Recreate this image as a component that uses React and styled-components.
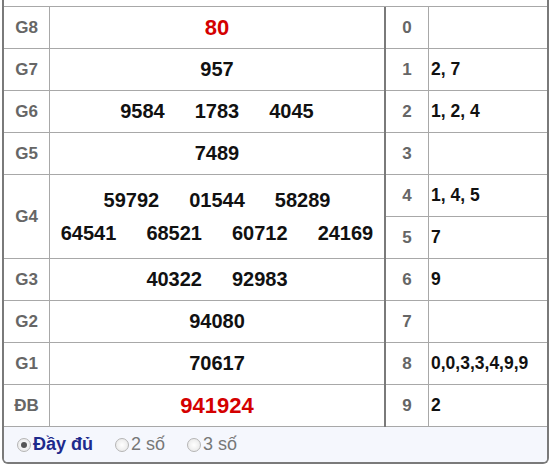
import React from 'react';
import styled, { createGlobalStyle } from 'styled-components';

const GlobalStyle = createGlobalStyle`
  body {
    margin: 0;
    background: #ffffff;
    font-family: "Liberation Sans", Arial, sans-serif;
  }
`;

const Frame = styled.div`
  margin-left: 2px;
  width: 543px;
  border: 2px solid #7a7a7a;
  border-top: none;
  border-radius: 0 0 6px 6px;
  overflow: hidden;
`;

const Caption = styled.div`
  height: 6px;
  border-bottom: 1px solid #a8a8a8;
`;

const Tables = styled.div`
  display: flex;
`;

const MainTable = styled.div`
  display: grid;
  grid-template-columns: 46px 334px;
  grid-auto-rows: 42px;
  border-right: 1px solid #7a7a7a;
`;

const LotoTable = styled.div`
  flex: 1;
  display: grid;
  grid-template-columns: 43px 1fr;
  grid-auto-rows: 42px;
  border-left: 1px solid #7a7a7a;
`;

const Cell = styled.div`
  display: flex;
  align-items: center;
  border-bottom: 1px solid #a8a8a8;
  grid-row: ${(p) => (p.$span ? `span ${p.$span}` : 'auto')};
`;

const Label = styled(Cell)`
  justify-content: center;
  border-right: 1px solid #a8a8a8;
  color: #666666;
  font-weight: bold;
  font-size: 17px;
`;

const Prize = styled(Cell)`
  flex-direction: column;
  justify-content: center;
  gap: 10px;
`;

const Line = styled.div`
  display: flex;
  justify-content: center;
  gap: 30px;
`;

const Num = styled.span`
  font-weight: bold;
  font-size: ${(p) => (p.$hot ? '22px' : '20px')};
  color: ${(p) => (p.$hot ? '#d40000' : '#111111')};
`;

const Head = styled(Cell)`
  justify-content: center;
  border-right: 1px solid #a8a8a8;
  color: #666666;
  font-weight: bold;
  font-size: 17px;
`;

const Tail = styled(Cell)`
  padding-left: 2px;
  color: #111111;
  font-weight: bold;
  font-size: 17.5px;
  white-space: nowrap;
`;

const Footer = styled.div`
  height: 35px;
  background: #f5f7fd;
  display: flex;
  align-items: center;
  padding-left: 13px;
  gap: 22px;
`;

const Option = styled.label`
  display: flex;
  align-items: center;
  gap: 2px;
  font-size: 18px;
  font-weight: ${(p) => (p.$active ? 'bold' : 'normal')};
  color: ${(p) => (p.$active ? '#1d2a8c' : '#777777')};
`;

const Dot = styled.span`
  width: 12px;
  height: 12px;
  border-radius: 50%;
  border: 1px solid #b5b5b5;
  background: radial-gradient(circle, #ffffff 0%, #e4e4e4 100%);
  display: flex;
  align-items: center;
  justify-content: center;
  &::after {
    content: '';
    width: 6px;
    height: 6px;
    border-radius: 50%;
    background: ${(p) => (p.$on ? '#555555' : 'transparent')};
  }
`;

const prizes = [
  { name: 'G8', lines: [['80']], hot: true },
  { name: 'G7', lines: [['957']] },
  { name: 'G6', lines: [['9584', '1783', '4045']] },
  { name: 'G5', lines: [['7489']] },
  { name: 'G4', lines: [['59792', '01544', '58289'], ['64541', '68521', '60712', '24169']], span: 2 },
  { name: 'G3', lines: [['40322', '92983']] },
  { name: 'G2', lines: [['94080']] },
  { name: 'G1', lines: [['70617']] },
  { name: 'ĐB', lines: [['941924']], hot: true },
];

const loto = ['', '2, 7', '1, 2, 4', '', '1, 4, 5', '7', '9', '', '0,0,3,3,4,9,9', '2'];

export default function App() {
  return (
    <>
      <GlobalStyle />
      <Frame>
        <Caption />
        <Tables>
          <MainTable>
            {prizes.map((p) => (
              <React.Fragment key={p.name}>
                <Label $span={p.span}>{p.name}</Label>
                <Prize $span={p.span}>
                  {p.lines.map((line, i) => (
                    <Line key={i}>
                      {line.map((n) => (
                        <Num key={n} $hot={p.hot}>{n}</Num>
                      ))}
                    </Line>
                  ))}
                </Prize>
              </React.Fragment>
            ))}
          </MainTable>
          <LotoTable>
            {loto.map((v, i) => (
              <React.Fragment key={i}>
                <Head>{i}</Head>
                <Tail>{v}</Tail>
              </React.Fragment>
            ))}
          </LotoTable>
        </Tables>
        <Footer>
          <Option $active>
            <Dot $on />
            Đầy đủ
          </Option>
          <Option>
            <Dot />
            2 số
          </Option>
          <Option>
            <Dot />
            3 số
          </Option>
        </Footer>
      </Frame>
    </>
  );
}
